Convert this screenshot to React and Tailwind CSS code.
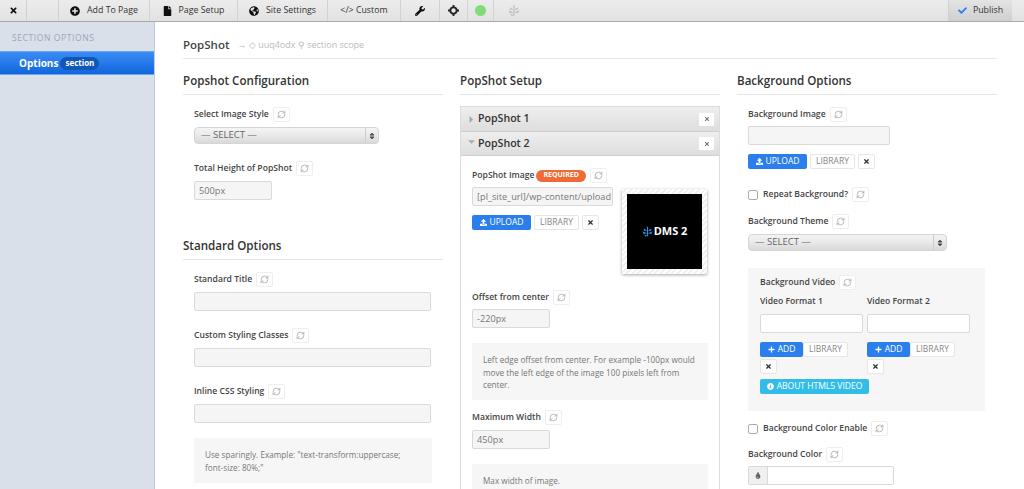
import React from "react";
import { FaTimes, FaPlusCircle, FaFile, FaGlobeAmericas, FaWrench, FaCheck, FaUpload, FaPlus, FaInfoCircle, FaTint, FaCaretDown, FaCaretRight, FaSort } from "react-icons/fa";
import { RefreshCw } from "lucide-react";

const Plant = ({ className }) => (
  <svg viewBox="0 0 16 16" className={className} fill="currentColor">
    <path d="M7.2 1h1.6v14H7.2z" />
    <path d="M7.6 6.5 2 3.5l1.2 3.6zM8.4 6.5 14 3.5l-1.2 3.6zM7.6 10.5 0.5 7.5l2 4zM8.4 10.5l7.1-3-2 4zM7.6 14 3 12l2 3.5z" />
  </svg>
);

const Target = () => (
  <svg viewBox="0 0 12 12" className="w-[11px] h-[11px]" fill="none" stroke="#222" strokeWidth="2">
    <circle cx="6" cy="6" r="3.4" />
    <path d="M6 0v2.5M6 9.5V12M0 6h2.5M9.5 6H12" />
  </svg>
);

const Cell = ({ w, children, className = "" }) => (
  <div className={`flex items-center justify-center gap-[7px] h-full border-r border-[#d2d2d2] shrink-0 ${className}`} style={{ width: w }}>
    {children}
  </div>
);

const Refresh = () => (
  <span className="inline-flex items-center justify-center w-[17px] h-[15px] bg-white border border-[#eeeeee] rounded-[2px] shrink-0">
    <RefreshCw className="w-[9px] h-[9px] text-[#aaaaaa]" strokeWidth={2.2} />
  </span>
);

const Label = ({ children, extra, className = "" }) => (
  <div className={`flex items-center gap-[4px] h-[15px] text-[8.6px] font-semibold text-[#444] ${className}`}>
    <span>{children}</span>
    {extra}
    <Refresh />
  </div>
);

const Input = ({ w = "w-full", value, h = "h-[19px]", bg = "bg-[#f5f5f5]" }) => (
  <div className={`${w} ${h} ${bg} border border-[#d9d9d9] rounded-[2px] px-[4px] flex items-center text-[9.2px] text-[#777] overflow-hidden whitespace-nowrap shrink-0`}>
    {value}
  </div>
);

const Select = ({ w }) => (
  <div className={`${w} h-[17px] rounded-[4px] border border-[#d5d5d5] bg-gradient-to-b from-[#f4f4f4] via-[#e9e9e9] to-[#d9d9d9] flex items-center text-[9.5px] text-[#666]`}>
    <span className="flex-1 pl-[6px]">— SELECT —</span>
    <span className="w-[13px] h-full border-l border-[#cfcfcf] flex items-center justify-center">
      <FaSort className="w-[6px] h-[8px] text-[#444]" />
    </span>
  </div>
);

const Library = () => (
  <span className="h-[15px] px-[5px] flex items-center bg-white border border-[#e6e6e6] rounded-[2px] text-[8.5px] text-[#888]">LIBRARY</span>
);
const Del = () => (
  <span className="w-[17px] h-[15px] flex items-center justify-center bg-white border border-[#e6e6e6] rounded-[2px]">
    <FaTimes className="w-[7px] h-[7px] text-[#333]" />
  </span>
);
const Upload = () => (
  <span className="w-[59px] h-[15px] flex items-center justify-center gap-[3px] bg-[#2b7fec] rounded-[2px] text-[8.5px] text-white">
    <FaUpload className="w-[7px] h-[7px]" />UPLOAD
  </span>
);
const Add = () => (
  <span className="w-[43px] h-[15px] flex items-center justify-center gap-[3px] bg-[#2b7fec] rounded-[2px] text-[8.5px] text-white">
    <FaPlus className="w-[7px] h-[7px]" />ADD
  </span>
);

const Heading = ({ children, className = "" }) => (
  <h2 className={`h-[29px] pt-[6px] border-b border-[#e5e5e5] text-[11.6px] leading-[18px] font-semibold text-[#333] ${className}`}>{children}</h2>
);

const Note = ({ children, className = "" }) => (
  <div className={`bg-[#f6f6f6] px-[11px] py-[11px] text-[8.2px] leading-[12.5px] text-[#777] ${className}`}>{children}</div>
);

const Check = ({ children, className = "" }) => (
  <div className={`flex items-center gap-[4px] h-[15px] text-[8.6px] font-semibold text-[#444] ${className}`}>
    <span className="w-[10px] h-[10px] mr-[1px] bg-white border border-[#aaa] rounded-[2px]" />
    <span>{children}</span>
    <Refresh />
  </div>
);

const AccHead = ({ title, open, h }) => (
  <div className={`${h} flex items-center pl-[5px] pr-[5px] bg-gradient-to-b from-[#eeeeee] to-[#dedede] border-b border-[#cfcfcf] shrink-0`}>
    {open ? <FaCaretDown className="w-[11px] h-[11px] text-[#aaa] -mt-[4px]" /> : <FaCaretRight className="w-[11px] h-[11px] text-[#aaa]" />}
    <span className="ml-[1px] flex-1 text-[10.6px] font-semibold text-[#333]">{title}</span>
    <span className="w-[15px] h-[13px] flex items-center justify-center bg-white rounded-[1px]">
      <FaTimes className="w-[6px] h-[6px] text-[#777]" />
    </span>
  </div>
);

export default function App() {
  return (
    <div className="w-[1024px] h-[489px] overflow-hidden flex flex-col bg-white font-['Open_Sans',sans-serif]">
      <header className="h-[22px] shrink-0 flex bg-gradient-to-b from-[#ececec] to-[#e2e2e2] border-b border-[#a9a9a9] text-[8.8px] font-medium text-[#333]">
        <Cell w={27}><FaTimes className="w-[9px] h-[9px] text-[#111]" /></Cell>
        <Cell w={32} className="border-[#c9c9c9]" />
        <Cell w={91}><FaPlusCircle className="w-[10px] h-[10px] text-[#111]" />Add To Page</Cell>
        <Cell w={88}><FaFile className="w-[9px] h-[10px] text-[#111]" />Page Setup</Cell>
        <Cell w={90}><FaGlobeAmericas className="w-[10px] h-[10px] text-[#111]" />Site Settings</Cell>
        <Cell w={73}>&lt;/&gt; Custom</Cell>
        <Cell w={39}><FaWrench className="w-[10px] h-[10px] text-[#111]" /></Cell>
        <Cell w={28}><Target /></Cell>
        <Cell w={26}><span className="w-[11px] h-[11px] rounded-full bg-[#7fdc78]" /></Cell>
        <Cell w={40} className="border-r-0"><Plant className="w-[12px] h-[13px] text-[#bdbdbd]" /></Cell>
        <div className="flex-1" />
        <div className="w-[64px] h-full flex items-center justify-center gap-[6px] bg-gradient-to-b from-[#e4e4e4] to-[#cfcfcf] border-l border-[#d2d2d2]">
          <FaCheck className="w-[9px] h-[9px] text-[#2b7fec]" />Publish
        </div>
        <div className="w-[12px]" />
      </header>

      <div className="flex-1 flex min-h-0">
        <aside className="w-[155px] shrink-0 bg-[#d9e0ea] border-r border-[#c3cad6]">
          <div className="pl-[12px] pt-[9px] h-[29px] text-[8.5px] leading-[14px] font-medium tracking-[0.6px] text-[#9aa7ba]">SECTION OPTIONS</div>
          <div className="h-[24px] flex items-center gap-[2px] pl-[19px] bg-gradient-to-b from-[#3a8cf5] to-[#0f66dc] border-y border-[#6ea6ee] text-white">
            <span className="text-[10px] font-bold">Options</span>
            <span className="h-[13px] px-[5px] flex items-center rounded-full bg-[#1257b8] text-[8px] font-bold">section</span>
          </div>
        </aside>

        <main className="flex-1 min-w-0 pl-[28px] pr-[27px] overflow-hidden">
          <div className="h-[37px] pt-[10px] border-b border-[#e8e8e8] flex items-center gap-[8px]">
            <span className="text-[11.5px] font-semibold text-[#444]">PopShot</span>
            <span className="text-[9px] text-[#bbb] flex items-center gap-[3px]">→ ◇ uuq4odx ⚲ section scope</span>
          </div>

          <div className="flex gap-[17px] mt-[7px]">
            <section className="w-[260px] shrink-0">
              <Heading>Popshot Configuration</Heading>
              <div className="px-[11px]">
                <Label className="mt-[12px]">Select Image Style</Label>
                <Select w="w-[185px] mt-[5px]" />
                <Label className="mt-[17px]">Total Height of PopShot</Label>
                <Input w="w-[78px] mt-[5px]" value="500px" />
              </div>
              <Heading className="mt-[31px]">Standard Options</Heading>
              <div className="px-[11px]">
                <Label className="mt-[12px]">Standard Title</Label>
                <Input w="w-[237px] mt-[5px]" />
                <Label className="mt-[17px]">Custom Styling Classes</Label>
                <Input w="w-[237px] mt-[5px]" />
                <Label className="mt-[17px]">Inline CSS Styling</Label>
                <Input w="w-[237px] mt-[5px]" />
                <Note className="mt-[15px] h-[45px]">Use sparingly. Example: "text-transform:uppercase; <span className="whitespace-nowrap">font-size: 80%;"</span></Note>
              </div>
            </section>

            <section className="w-[260px] shrink-0">
              <Heading>PopShot Setup</Heading>
              <div className="mt-[11px] border border-[#dcdcdc] border-b-0 h-[400px] flex flex-col">
                <AccHead title="PopShot 1" h="h-[25px]" />
                <AccHead title="PopShot 2" h="h-[24px]" open />
                <div className="px-[11px] pt-[12px]">
                  <div className="flex">
                    <div className="w-[150px] shrink-0">
                      <Label extra={<span className="h-[12px] -ml-[2px] px-[7px] flex items-center rounded-full bg-[#f06a35] text-white text-[7px] font-bold">REQUIRED</span>}>PopShot Image</Label>
                      <Input w="w-[141px] mt-[4px]" value="[pl_site_url]/wp-content/upload" />
                      <div className="flex gap-[3px] mt-[9px]"><Upload /><Library /><Del /></div>
                    </div>
                    <div className="w-[85px] h-[85px] mt-[21px] shrink-0 shadow-[0_1px_3px_rgba(0,0,0,0.35)] p-[5px] bg-[repeating-linear-gradient(135deg,#ffffff_0px,#ffffff_2px,#f0f0f0_2px,#f0f0f0_4px)]">
                      <div className="w-full h-full bg-black flex items-center justify-center gap-[1px] text-white text-[11px] font-bold">
                        <Plant className="w-[11px] h-[13px] text-[#2b8fe8]" />DMS 2
                      </div>
                    </div>
                  </div>
                  <Label className="mt-[16px]">Offset from center</Label>
                  <Input w="w-[78px] mt-[4px]" value="-220px" />
                  <Note className="mt-[15px] h-[57px]">Left edge offset from center. For example -100px would move the left edge of the image 100 pixels left from center.</Note>
                  <Label className="mt-[10px]">Maximum Width</Label>
                  <Input w="w-[78px] mt-[5px]" value="450px" />
                  <Note className="mt-[15px] h-[45px]">Max width of image.</Note>
                </div>
              </div>
            </section>

            <section className="w-[260px] shrink-0">
              <Heading>Background Options</Heading>
              <div className="px-[11px]">
                <Label className="mt-[12px]">Background Image</Label>
                <Input w="w-[142px] mt-[4px]" />
                <div className="flex gap-[3px] mt-[9px]"><Upload /><Library /><Del /></div>
                <Check className="mt-[18px]">Repeat Background?</Check>
                <Label className="mt-[12px]">Background Theme</Label>
                <Select w="w-[199px] mt-[5px]" />
                <div className="mt-[17px] w-[237px] h-[143px] bg-[#f6f6f6] px-[12px] pt-[7px]">
                  <Label>Background Video</Label>
                  <div className="flex gap-[4px] mt-[5px]">
                    {["Video Format 1", "Video Format 2"].map((t) => (
                      <div key={t} className="w-[103px] shrink-0">
                        <div className="text-[8.6px] leading-[13px] font-semibold text-[#444]">{t}</div>
                        <Input w="w-[103px] mt-[6px]" bg="bg-white" />
                        <div className="flex mt-[9px]"><Add /><Library /></div>
                        <div className="mt-[2px]"><Del /></div>
                      </div>
                    ))}
                  </div>
                  <div className="mt-[5px] w-[109px] h-[15px] flex items-center justify-center gap-[3px] bg-[#32bde8] rounded-[2px] text-[8.5px] text-white">
                    <FaInfoCircle className="w-[7px] h-[7px]" />ABOUT HTML5 VIDEO
                  </div>
                </div>
                <Check className="mt-[10px]">Background Color Enable</Check>
                <Label className="mt-[11px]">Background Color</Label>
                <div className="mt-[4px] w-[146px] h-[19px] flex border border-[#d9d9d9] rounded-[2px] bg-white">
                  <span className="w-[19px] bg-[#f0f0f0] border-r border-[#d9d9d9] flex items-center justify-center">
                    <FaTint className="w-[6px] h-[7px] text-[#666]" />
                  </span>
                </div>
              </div>
            </section>
          </div>
        </main>
      </div>
    </div>
  );
}
